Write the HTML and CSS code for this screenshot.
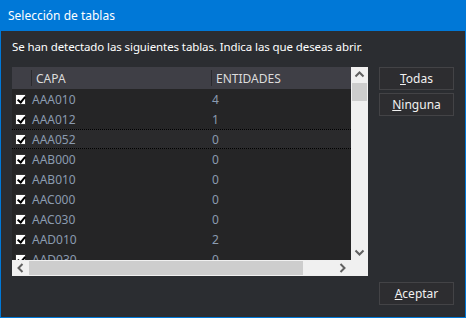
FILE: index.html
```html
<!DOCTYPE html>
<html lang="es">
<head>
    <meta charset="UTF-8">
    <title>Selección de tablas</title>
    <link rel="stylesheet" href="styles.css">
</head>
<body>

    <!-- Dialog window -->
    <div class="dialog">
        <div class="title-bar">Selección de tablas</div>

        <div class="dialog-body">
            <p class="intro">Se han detectado las siguientes tablas. Indica las que deseas abrir.</p>

            <div class="main-row">
                <!-- Table list with scrollbars -->
                <div class="grid-box">
                    <div class="grid-view">
                        <div class="grid-row grid-head">
                            <div class="cell cell-check"></div>
                            <div class="cell cell-capa">CAPA</div>
                            <div class="cell cell-ent">ENTIDADES</div>
                        </div>
                        <div class="grid-row"><div class="cell cell-check"><span class="check"></span></div><div class="cell cell-capa">AAA010</div><div class="cell cell-ent">4</div></div>
                        <div class="grid-row"><div class="cell cell-check"><span class="check"></span></div><div class="cell cell-capa">AAA012</div><div class="cell cell-ent">1</div></div>
                        <div class="grid-row focused"><div class="cell cell-check"><span class="check"></span></div><div class="cell cell-capa">AAA052</div><div class="cell cell-ent">0</div></div>
                        <div class="grid-row"><div class="cell cell-check"><span class="check"></span></div><div class="cell cell-capa">AAB000</div><div class="cell cell-ent">0</div></div>
                        <div class="grid-row"><div class="cell cell-check"><span class="check"></span></div><div class="cell cell-capa">AAB010</div><div class="cell cell-ent">0</div></div>
                        <div class="grid-row"><div class="cell cell-check"><span class="check"></span></div><div class="cell cell-capa">AAC000</div><div class="cell cell-ent">0</div></div>
                        <div class="grid-row"><div class="cell cell-check"><span class="check"></span></div><div class="cell cell-capa">AAC030</div><div class="cell cell-ent">0</div></div>
                        <div class="grid-row"><div class="cell cell-check"><span class="check"></span></div><div class="cell cell-capa">AAD010</div><div class="cell cell-ent">2</div></div>
                        <div class="grid-row"><div class="cell cell-check"><span class="check"></span></div><div class="cell cell-capa">AAD030</div><div class="cell cell-ent">0</div></div>
                    </div>

                    <!-- vertical scrollbar -->
                    <div class="vscroll">
                        <svg class="arrow" width="17" height="16" viewBox="0 0 17 16"><path d="M4.5 9.5 L8.5 5.5 L12.5 9.5" fill="none" stroke="#606060" stroke-width="2"/></svg>
                        <div class="vthumb"></div>
                        <div class="vtrack"></div>
                        <svg class="arrow" width="17" height="16" viewBox="0 0 17 16"><path d="M4.5 6.5 L8.5 10.5 L12.5 6.5" fill="none" stroke="#606060" stroke-width="2"/></svg>
                    </div>

                    <!-- horizontal scrollbar -->
                    <div class="hscroll">
                        <svg class="arrow" width="17" height="16" viewBox="0 0 17 16"><path d="M10.5 4 L6.5 8 L10.5 12" fill="none" stroke="#606060" stroke-width="2"/></svg>
                        <div class="hthumb"></div>
                        <div class="htrack"></div>
                        <svg class="arrow" width="17" height="16" viewBox="0 0 17 16"><path d="M6.5 4 L10.5 8 L6.5 12" fill="none" stroke="#606060" stroke-width="2"/></svg>
                    </div>
                    <div class="corner"></div>
                </div>

                <div class="side-buttons">
                    <button class="btn"><u>T</u>odas</button>
                    <button class="btn"><u>N</u>inguna</button>
                </div>
            </div>

            <div class="footer">
                <button class="btn"><u>A</u>ceptar</button>
            </div>
        </div>
    </div>

</body>
</html>
```

FILE: styles.css
```css
/* Basic page */
body {
    margin: 0;
    font-family: 'Noto Sans', 'Open Sans', sans-serif;
    font-size: 12px;
    background: #2b2d31;
}

/* Dialog frame */
.dialog {
    width: 466px;
    height: 318px;
    box-sizing: border-box;
    border: 1px solid #0078d7;
    border-top: none;
    background-color: #2b2d31;
    display: flex;
    flex-direction: column;
}

.title-bar {
    height: 31px;
    background-color: #0078d7;
    color: #ffffff;
    font-size: 12px;
    line-height: 31px;
    padding-left: 8px;
    margin: 0 -1px; /* cover the side borders */
}

.dialog-body {
    flex: 1;
    display: flex;
    flex-direction: column;
    padding: 0 11px 0 11px;
}

.intro {
    margin: 0;
    height: 36px;
    line-height: 31px;
    color: #ffffff;
    font-size: 11.5px;
    letter-spacing: -0.1px;
}

.main-row {
    display: flex;
    gap: 11px;
}

/* Table with scrollbars */
.grid-box {
    width: 356px;
    height: 209px;
    display: grid;
    grid-template-columns: 339px 17px;
    grid-template-rows: 193px 16px;
    background-color: #252526;
}

.grid-view {
    overflow: hidden;
    background-color: #252526;
}

.grid-row {
    display: flex;
    height: 20px;
    box-sizing: border-box;
    color: #8b9bb0;
    font-size: 12px;
}

.grid-head {
    height: 22px;
    background-color: #3f3f46;
    color: #dcdcdc;
}

.grid-row.focused {
    border-top: 1px dotted #000000;
    border-bottom: 1px dotted #000000;
    background-color: #2a2a2c;
}

.cell {
    display: flex;
    align-items: center;
    box-sizing: border-box;
}

.cell-check {
    width: 19px;
    padding-left: 3px;
}

.cell-capa {
    width: 180px;
    padding-left: 1px;
}

.cell-ent {
    flex: 1;
    padding-left: 1px;
}

.grid-head .cell-capa,
.grid-head .cell-ent {
    border-left: 1px solid #2a2a2e;
    padding-left: 4px;
    margin: 3px 0;
}

.check {
    width: 11px;
    height: 11px;
    box-sizing: border-box;
    background-color: #ffffff;
    border: 1px solid #333333;
    position: relative;
}

.check::after {
    content: "";
    position: absolute;
    left: 3px;
    top: 0px;
    width: 3px;
    height: 6px;
    border-right: 2px solid #000000;
    border-bottom: 2px solid #000000;
    transform: rotate(40deg);
}

.vscroll {
    background-color: #f0f0f0;
    display: flex;
    flex-direction: column;
}

.vthumb {
    height: 18px;
    margin: 0 1px;
    background-color: #cdcdcd;
}

.vtrack {
    flex: 1;
}

.hscroll {
    background-color: #f0f0f0;
    display: flex;
    grid-column: 1;
}

.hthumb {
    width: 274px;
    margin: 1px 0;
    background-color: #cdcdcd;
}

.htrack {
    flex: 1;
}

.arrow {
    display: block;
    flex-shrink: 0;
}

.corner {
    background-color: #f0f0f0;
}

/* Buttons */
.side-buttons {
    display: flex;
    flex-direction: column;
    gap: 3px;
}

.btn {
    width: 75px;
    height: 23px;
    background-color: #2d2d30;
    border: 1px solid #434346;
    color: #f1f1f1;
    font-family: 'Noto Sans', 'Open Sans', sans-serif;
    font-size: 12px;
    padding: 0;
}

.footer {
    display: flex;
    justify-content: flex-end;
    padding-top: 6px;
}
```
